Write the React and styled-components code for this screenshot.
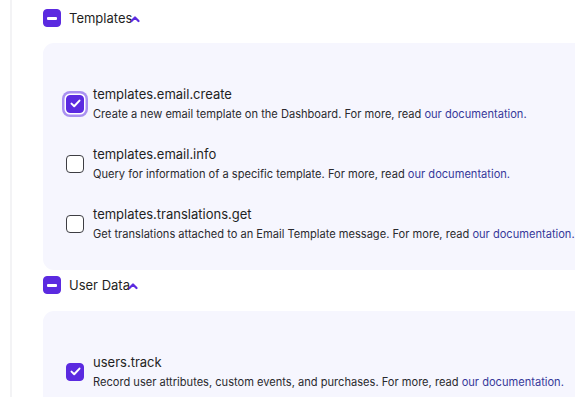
import React from "react";
import styled, { createGlobalStyle } from "styled-components";

const Global = createGlobalStyle`
  html, body { margin: 0; padding: 0; background: #fff; overflow: hidden; }
  body { font-family: Inter, "Noto Sans", sans-serif; color: #1f1f23; }
`;

const Page = styled.div`
  margin-left: 10px;
  border-left: 2px solid #f3f3f5;
  height: 397px;
  overflow: hidden;
  padding: 9px 0 0 31px;
  box-sizing: border-box;
`;

const Section = styled.section`
  display: flex;
  flex-direction: column;
`;

const SectionHeader = styled.div`
  display: flex;
  align-items: center;
  height: 18px;
  gap: 8px;
  margin-bottom: ${(p) => p.$gap}px;
`;

const Label = styled.span`
  font-size: 13px;
  line-height: 18px;
  color: #1f1f23;
  display: inline-flex;
  align-items: center;
`;

const Chevron = styled.svg`
  width: 10px;
  height: 8px;
  margin-left: -2px;
  margin-top: 1px;
`;

const Box = styled.span`
  flex: none;
  width: 18px;
  height: 18px;
  box-sizing: border-box;
  border-radius: 4px;
  display: flex;
  align-items: center;
  justify-content: center;
  background: ${(p) => (p.$on ? "#5b2ae0" : "#fff")};
  border: ${(p) => (p.$on ? "1px solid #5b2ae0" : "1.5px solid #3e3e44")};
  box-shadow: ${(p) =>
    p.$focus ? "0 0 0 1.5px #fff, 0 0 0 4px #a990f1" : "none"};
`;

const Bar = styled.span`
  width: 10px;
  height: 3px;
  border-radius: 1px;
  background: #fff;
`;

const Card = styled.div`
  width: 620px;
  background: #f6f6fe;
  border-radius: 11px;
  padding: 42px 0 28px 23px;
  box-sizing: border-box;
  display: flex;
  flex-direction: column;
  gap: 23px;
  margin-bottom: 6px;
`;

const Item = styled.div`
  display: flex;
  align-items: center;
  gap: 9px;
`;

const Text = styled.div`
  display: flex;
  flex-direction: column;
  gap: 3px;
  white-space: nowrap;
`;

const Title = styled.div`
  font-size: 13px;
  line-height: 18px;
  color: #1f1f23;
`;

const Desc = styled.div`
  font-size: 11.1px;
  line-height: 16px;
  color: #2a2a2e;
`;

const Link = styled.a`
  color: #36399a;
  text-decoration: none;
`;

const Check = () => (
  <svg width="11" height="9" viewBox="0 0 11 9">
    <path d="M1.5 4.6 L4.2 7.2 L9.5 1.6" fill="none" stroke="#fff" strokeWidth="2" strokeLinecap="round" strokeLinejoin="round" />
  </svg>
);

const Up = () => (
  <Chevron viewBox="0 0 10 8">
    <path d="M1.5 6 L5 2.5 L8.5 6" fill="none" stroke="#5b2ae0" strokeWidth="2.2" strokeLinecap="round" strokeLinejoin="round" />
  </Chevron>
);

const PermItem = ({ name, desc, on, focus }) => (
  <Item>
    <Box $on={on} $focus={focus}>{on && <Check />}</Box>
    <Text>
      <Title>{name}</Title>
      <Desc>
        {desc} For more, read <Link href="#">our documentation.</Link>
      </Desc>
    </Text>
  </Item>
);

export default function App() {
  return (
    <>
      <Global />
      <Page>
        <Section>
          <SectionHeader $gap={16}>
            <Box $on><Bar /></Box>
            <Label>Templates<Up /></Label>
          </SectionHeader>
          <Card>
            <PermItem on focus name="templates.email.create" desc="Create a new email template on the Dashboard." />
            <PermItem name="templates.email.info" desc="Query for information of a specific template." />
            <PermItem name="templates.translations.get" desc="Get translations attached to an Email Template message." />
          </Card>
        </Section>
        <Section>
          <SectionHeader $gap={17}>
            <Box $on><Bar /></Box>
            <Label>User Data<Up /></Label>
          </SectionHeader>
          <Card>
            <PermItem on name="users.track" desc="Record user attributes, custom events, and purchases." />
          </Card>
        </Section>
      </Page>
    </>
  );
}
